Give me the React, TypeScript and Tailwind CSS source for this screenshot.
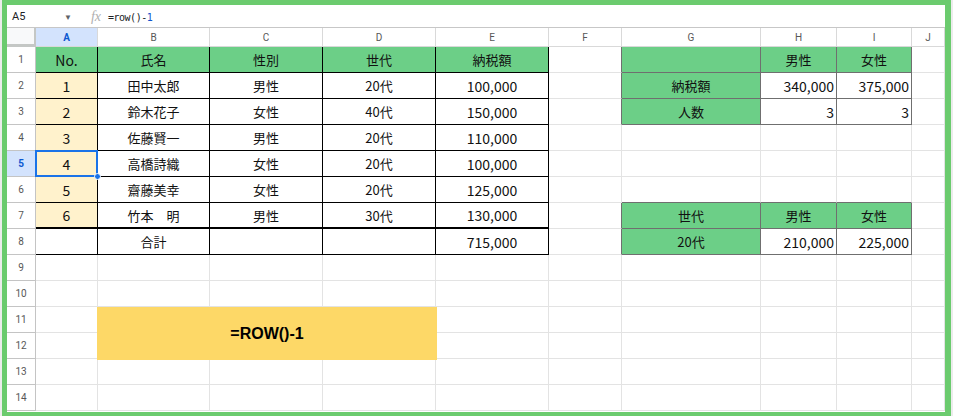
import React from 'react';
import clsx from 'clsx';

type Cell = { text?: string; bg?: string; align?: 'left' | 'center' | 'right' };

const COLS = ['A', 'B', 'C', 'D', 'E', 'F', 'G', 'H', 'I', 'J'];
const ROWS = Array.from({ length: 14 }, (_, i) => i + 1);

const GREEN = 'bg-[#6ccf87]';
const CREAM = 'bg-[#fff2cc]';

// sheet contents keyed by A1 notation
const cells: Record<string, Cell> = {
    A1: { text: 'No.', bg: GREEN }, B1: { text: '氏名', bg: GREEN }, C1: { text: '性別', bg: GREEN }, D1: { text: '世代', bg: GREEN }, E1: { text: '納税額', bg: GREEN },
    A2: { text: '1', bg: CREAM }, B2: { text: '田中太郎' }, C2: { text: '男性' }, D2: { text: '20代' }, E2: { text: '100,000' },
    A3: { text: '2', bg: CREAM }, B3: { text: '鈴木花子' }, C3: { text: '女性' }, D3: { text: '40代' }, E3: { text: '150,000' },
    A4: { text: '3', bg: CREAM }, B4: { text: '佐藤賢一' }, C4: { text: '男性' }, D4: { text: '20代' }, E4: { text: '110,000' },
    A5: { text: '4', bg: CREAM }, B5: { text: '高橋詩織' }, C5: { text: '女性' }, D5: { text: '20代' }, E5: { text: '100,000' },
    A6: { text: '5', bg: CREAM }, B6: { text: '齋藤美幸' }, C6: { text: '女性' }, D6: { text: '20代' }, E6: { text: '125,000' },
    A7: { text: '6', bg: CREAM }, B7: { text: '竹本　明' }, C7: { text: '男性' }, D7: { text: '30代' }, E7: { text: '130,000' },
    B8: { text: '合計' }, E8: { text: '715,000' },

    G1: { bg: GREEN }, H1: { text: '男性', bg: GREEN }, I1: { text: '女性', bg: GREEN },
    G2: { text: '納税額', bg: GREEN }, H2: { text: '340,000', align: 'right' }, I2: { text: '375,000', align: 'right' },
    G3: { text: '人数', bg: GREEN }, H3: { text: '3', align: 'right' }, I3: { text: '3', align: 'right' },

    G7: { text: '世代', bg: GREEN }, H7: { text: '男性', bg: GREEN }, I7: { text: '女性', bg: GREEN },
    G8: { text: '20代', bg: GREEN }, H8: { text: '210,000', align: 'right' }, I8: { text: '225,000', align: 'right' },
};

const inMain = (c: number, r: number) => c >= 0 && c <= 4 && r >= 1 && r <= 8;
const inSide = (c: number, r: number) => c >= 6 && c <= 8 && ((r >= 1 && r <= 3) || (r >= 7 && r <= 8));

const rightCls = (c: number, r: number) => {
    if (inMain(c, r)) return 'border-r-black';
    if (inSide(c, r) || inSide(c + 1, r)) return 'border-r-[#6f6f6f]';
    return 'border-r-[#e3e3e3]';
};

const bottomCls = (c: number, r: number) => {
    if (inMain(c, r)) return r === 7 ? 'border-b-2 border-b-black' : 'border-b border-b-black';
    if (inSide(c, r) || inSide(c, r + 1)) return 'border-b border-b-[#6f6f6f]';
    return 'border-b border-b-[#e3e3e3]';
};

const SheetCell: React.FC<{ c: number; r: number }> = ({ c, r }) => {
    const key = `${COLS[c]}${r}`;
    const cell = cells[key];
    const numeric = cell?.text ? /^[0-9,.]+$/.test(cell.text) : false;
    return (
        <div
            className={clsx(
                'relative flex items-center border-r',
                rightCls(c, r),
                bottomCls(c, r),
                cell?.bg ?? 'bg-white',
                cell?.align === 'right' ? 'justify-end pr-[2px]' : 'justify-center',
                numeric || key === 'A1' ? 'text-[14px]' : 'text-[13px]'
            )}
        >
            {cell?.text && <span className="leading-none whitespace-pre">{cell.text}</span>}

            {key === 'A5' && (
                <>
                    <div className="absolute -left-px -top-px -right-px -bottom-px border-2 border-[#1a73e8]" />
                    <div className="absolute -right-[4px] -bottom-[4px] w-[7px] h-[7px] rounded-full bg-[#1a73e8] border border-white z-10" />
                </>
            )}

            {key === 'B11' && (
                <div className="absolute left-[-1px] top-0 w-[340px] h-[53px] bg-[#fdd867] z-10 flex items-center justify-center font-['Liberation_Sans',sans-serif] font-bold text-[16px] text-black">
                    =ROW()-1
                </div>
            )}
        </div>
    );
};

export default function App() {
    return (
        <div className="w-[953px] h-[416px] bg-[#ececec] overflow-hidden">
            <div className="ml-[2px] w-[949px] h-[416px] border-t-[5px] border-l-[5px] border-r-[6px] border-b-[4px] border-[#6bcb6e] bg-white flex flex-col font-['Noto_Sans_CJK_JP',sans-serif] text-[#111]">
                {/* formula bar */}
                <div className="h-[23px] pt-[2px] flex items-center border-b border-[#c7c7c7] font-['Roboto',sans-serif] text-[11px] text-[#202124]">
                    <span className="w-[57px] pl-[5px]">A5</span>
                    <span className="text-[8px] text-[#5f6368] mt-[2px]">▼</span>
                    <span className="ml-[19px] font-['Liberation_Serif',serif] italic text-[14px] text-[#b0b0b0] mb-[2px]">fx</span>
                    <span className="ml-[7px] font-['DejaVu_Sans_Mono',monospace] text-[10px] tracking-[-0.5px]">
                        =row()-<span className="text-[#1155cc]">1</span>
                    </span>
                </div>

                {/* column headers */}
                <div className="grid grid-cols-[29px_62px_112px_113px_113px_113px_73px_139px_76px_75px_33px] h-[19px] font-['Roboto',sans-serif] text-[10px] text-[#575757]">
                    <div className="bg-[#f8f9fa] border-r-2 border-b-[3px] border-[#c4c7c5]" />
                    {COLS.map((col) => (
                        <div
                            key={col}
                            className={clsx(
                                'flex items-center justify-center border-r border-b border-[#d9d9d9]',
                                col === 'A' ? 'bg-[#d3e3fd] text-[#0b57d0] font-bold' : 'bg-white'
                            )}
                        >
                            {col}
                        </div>
                    ))}
                </div>

                {/* body */}
                <div className="grid grid-cols-[29px_62px_112px_113px_113px_113px_73px_139px_76px_75px_33px] auto-rows-[26px]">
                    {ROWS.map((r) => (
                        <React.Fragment key={r}>
                            <div
                                className={clsx(
                                    'flex items-center justify-center border-r border-b border-[#c4c4c4] font-["Roboto",sans-serif] text-[10px]',
                                    r === 5 ? 'bg-[#d3e3fd] text-[#0b57d0] font-bold' : 'bg-white text-[#575757]'
                                )}
                            >
                                {r}
                            </div>
                            {COLS.map((_, c) => (
                                <SheetCell key={c} c={c} r={r} />
                            ))}
                        </React.Fragment>
                    ))}
                </div>
            </div>
        </div>
    );
}
